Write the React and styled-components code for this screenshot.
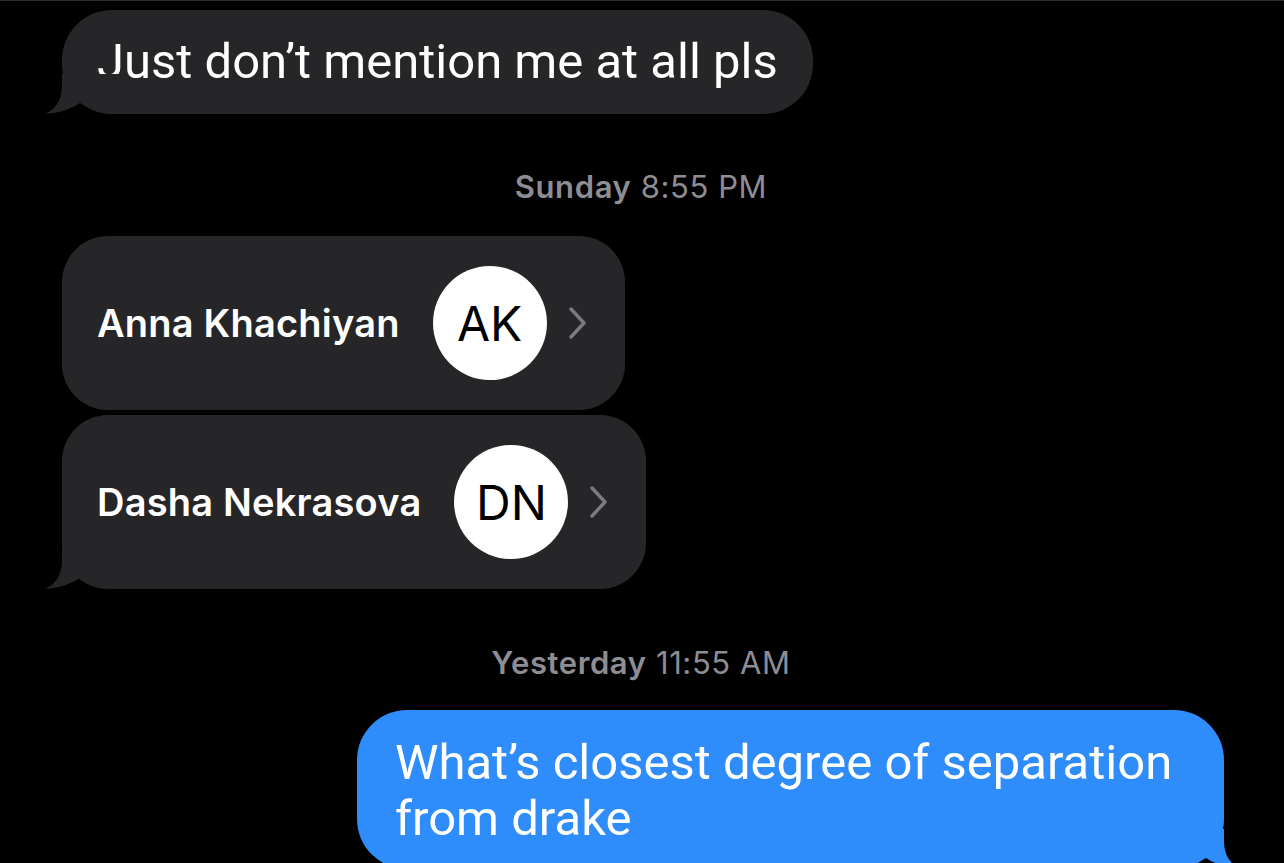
import React from "react";
import styled, { createGlobalStyle } from "styled-components";

const Global = createGlobalStyle`
  html, body {
    margin: 0;
    padding: 0;
    background: #000;
    height: 863px;
    overflow: hidden;
  }
  * { box-sizing: border-box; }
`;

const GRAY = "#262629";
const BLUE = "#2f8cfb";

const Thread = styled.div`
  display: flex;
  flex-direction: column;
  height: 863px;
  overflow: hidden;
  border-top: 1px solid #2a2a2c;
  padding: 9px 60px 0 62px;
  font-family: Inter, "Liberation Sans", sans-serif;
  -webkit-font-smoothing: antialiased;
`;

const Bubble = styled.div`
  position: relative;
  align-self: ${(p) => (p.$out ? "flex-end" : "flex-start")};
  background: ${(p) => (p.$out ? BLUE : GRAY)};
  color: #fff;
  font-family: Roboto, Inter, sans-serif;
  font-size: 49px;
  font-weight: 400;
  letter-spacing: 0px;
  line-height: 56px;
  border-radius: 50px;
  padding: ${(p) => (p.$out ? "25px 38px 22px 38px" : "24px 35px 24px 35px")};
  width: ${(p) => p.$width || "auto"};
  flex-shrink: 0;
`;

const TailSvg = styled.svg`
  position: absolute;
  bottom: 0;
  ${(p) => (p.$out ? "right: -18px; transform: scaleX(-1);" : "left: -18px;")}
  width: 75px;
  height: 40px;
  display: block;
`;

const Tail = ({ out, color }) => (
  <TailSvg $out={out} viewBox="0 0 75 40">
    <path
      d="M18,0 H75 V40 H70 C58,40 46,35 36,29 C27,35 15,39 1,40 C10,36 18,28 18,12 Z"
      fill={color}
    />
  </TailSvg>
);

const Stamp = styled.div`
  align-self: center;
  margin-left: -4px;
  color: #8d8d93;
  font-size: 31px;
  line-height: 36px;
  letter-spacing: 0.6px;
  margin-top: ${(p) => p.$top}px;
  margin-bottom: ${(p) => p.$bottom}px;
  b { font-weight: 600; }
`;

const Contacts = styled.div`
  display: flex;
  flex-direction: column;
  align-items: flex-start;
  gap: 5px;
`;

const ContactCard = styled.div`
  position: relative;
  display: flex;
  align-items: center;
  height: 174px;
  background: ${GRAY};
  border-radius: 46px;
  padding: 0 39px 0 35px;
`;

const Name = styled.span`
  color: #fff;
  font-size: 38px;
  font-weight: 600;
  letter-spacing: 0.2px;
  margin-right: 33px;
`;

const Avatar = styled.div`
  width: 114px;
  height: 114px;
  border-radius: 50%;
  background: #fff;
  color: #000;
  display: flex;
  align-items: center;
  justify-content: center;
  font-size: 48px;
  font-weight: 400;
  margin-right: 22px;
`;

const ChevronSvg = styled.svg`
  width: 17px;
  height: 32px;
  display: block;
`;

const Chevron = () => (
  <ChevronSvg viewBox="0 0 17 32">
    <polyline
      points="2,2 15,16 2,30"
      fill="none"
      stroke="#7b7b80"
      strokeWidth="3.4"
      strokeLinecap="round"
      strokeLinejoin="round"
    />
  </ChevronSvg>
);

const contacts = [
  { name: "Anna Khachiyan", initials: "AK" },
  { name: "Dasha Nekrasova", initials: "DN" },
];

export default function App() {
  return (
    <>
      <Global />
      <Thread>
        <Bubble>
          Just don’t mention me at all pls
          <Tail color={GRAY} />
        </Bubble>
        <Stamp $top={55} $bottom={31}>
          <b>Sunday</b> 8:55 PM
        </Stamp>
        <Contacts>
          {contacts.map((c, i) => (
            <ContactCard key={c.initials}>
              <Name>{c.name}</Name>
              <Avatar>{c.initials}</Avatar>
              <Chevron />
              {i === contacts.length - 1 && <Tail color={GRAY} />}
            </ContactCard>
          ))}
        </Contacts>
        <Stamp $top={56} $bottom={29}>
          <b>Yesterday</b> 11:55 AM
        </Stamp>
        <Bubble $out $width="867px">
          What’s closest degree of separation from drake
          <Tail out color={BLUE} />
        </Bubble>
      </Thread>
    </>
  );
}
